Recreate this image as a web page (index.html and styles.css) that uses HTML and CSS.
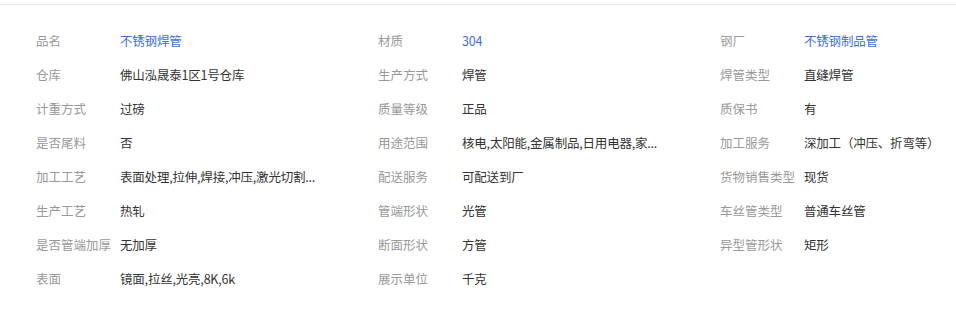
FILE: index.html
```html
<!DOCTYPE html>
<html lang="zh">
<head>
<meta charset="utf-8">
<link rel="stylesheet" href="styles.css">
</head>
<body>
<div class="panel">
  <div class="grid">
    <div class="item"><span class="label">品名</span><span class="value link">不锈钢焊管</span></div>
    <div class="item"><span class="label">材质</span><span class="value link">304</span></div>
    <div class="item"><span class="label">钢厂</span><span class="value link">不锈钢制品管</span></div>

    <div class="item"><span class="label">仓库</span><span class="value">佛山泓晟泰1区1号仓库</span></div>
    <div class="item"><span class="label">生产方式</span><span class="value">焊管</span></div>
    <div class="item"><span class="label">焊管类型</span><span class="value">直缝焊管</span></div>

    <div class="item"><span class="label">计重方式</span><span class="value">过磅</span></div>
    <div class="item"><span class="label">质量等级</span><span class="value">正品</span></div>
    <div class="item"><span class="label">质保书</span><span class="value">有</span></div>

    <div class="item"><span class="label">是否尾料</span><span class="value">否</span></div>
    <div class="item"><span class="label">用途范围</span><span class="value">核电,太阳能,金属制品,日用电器,家...</span></div>
    <div class="item"><span class="label">加工服务</span><span class="value">深加工（冲压、折弯等）</span></div>

    <div class="item"><span class="label">加工工艺</span><span class="value">表面处理,拉伸,焊接,冲压,激光切割...</span></div>
    <div class="item"><span class="label">配送服务</span><span class="value">可配送到厂</span></div>
    <div class="item"><span class="label">货物销售类型</span><span class="value">现货</span></div>

    <div class="item"><span class="label">生产工艺</span><span class="value">热轧</span></div>
    <div class="item"><span class="label">管端形状</span><span class="value">光管</span></div>
    <div class="item"><span class="label">车丝管类型</span><span class="value">普通车丝管</span></div>

    <div class="item"><span class="label">是否管端加厚</span><span class="value">无加厚</span></div>
    <div class="item"><span class="label">断面形状</span><span class="value">方管</span></div>
    <div class="item"><span class="label">异型管形状</span><span class="value">矩形</span></div>

    <div class="item"><span class="label">表面</span><span class="value">镜面,拉丝,光亮,8K,6k</span></div>
    <div class="item"><span class="label">展示单位</span><span class="value">千克</span></div>
  </div>
</div>
</body>
</html>
```

FILE: styles.css
```css
html, body {
  margin: 0;
  padding: 0;
  background: #fff;
}
body {
  font-family: "Noto Sans CJK SC", "Microsoft YaHei", "Liberation Sans", sans-serif;
  font-size: 12.5px;
  color: #333;
}
.panel {
  margin-top: 4px;
  border-top: 1px solid #e8e8e8;
  padding: 18px 0 0 36px;
}
.grid {
  display: grid;
  grid-template-columns: 342px 342px 1fr;
  grid-auto-rows: 34px;
}
.item {
  display: flex;
  align-items: center;
  min-width: 0;
  white-space: nowrap;
}
.label {
  width: 84px;
  flex: none;
  color: #999;
}
.value {
  color: #333;
  letter-spacing: -0.2px;
}
.link {
  color: #3c6ee0;
}
```
